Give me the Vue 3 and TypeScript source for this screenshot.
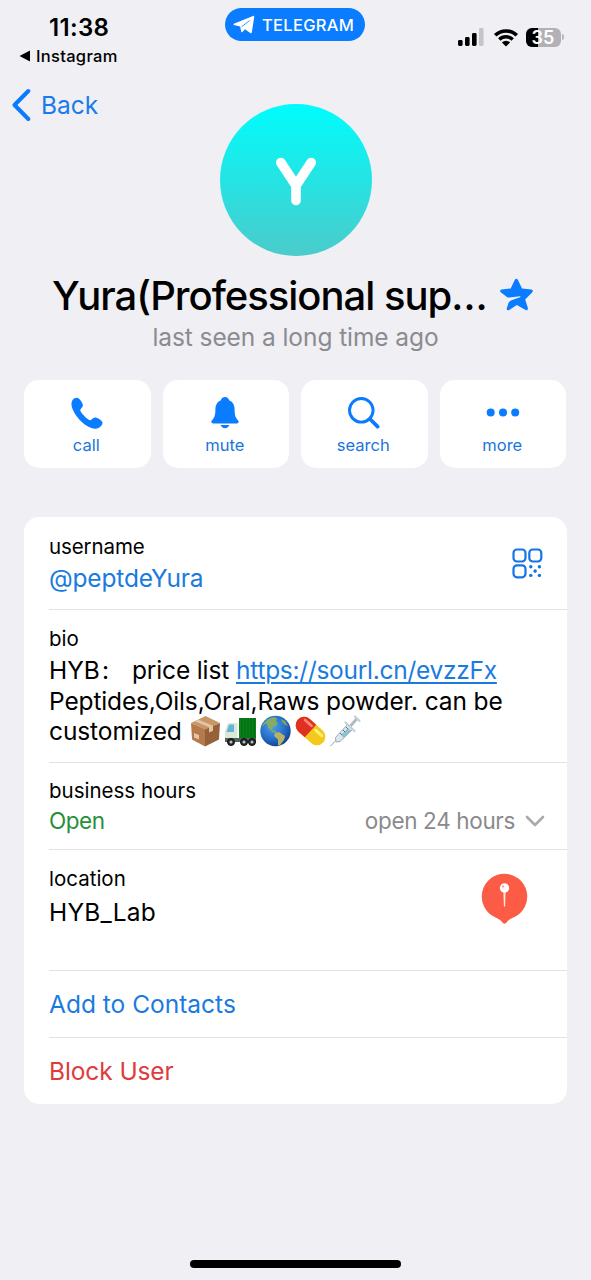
<script setup lang="ts">
interface Action {
  id: 'call' | 'mute' | 'search' | 'more'
  label: string
}

const actions: Action[] = [
  { id: 'call', label: 'call' },
  { id: 'mute', label: 'mute' },
  { id: 'search', label: 'search' },
  { id: 'more', label: 'more' },
]
</script>

<template>
  <main class="screen">
    <header class="status">
      <div class="status-left">
        <div class="time">11:38</div>
        <div class="return">
          <svg width="12" height="12" viewBox="0 0 12 12"><path d="M.5 6 11 .6v10.800z" fill="#000" /></svg>
          <span>Instagram</span>
        </div>
      </div>
      <div class="pill">
        <svg width="22" height="20" viewBox="0 0 22 20">
          <path d="M.8 8.800 20 .9q1.500-.5 1.200 1L18.900 17.300q-.4 1.500-1.700.6L12 14.200 9.400 17q-1 .8-1.200-.6L7.100 11.500.9 10Q0 9.500.8 8.800Z" fill="#fff" />
          <path d="M8.800 11.600 16.300 5.800" fill="none" stroke="#0a7cff" stroke-width=".8" stroke-linecap="round" />
        </svg>
        <span>TELEGRAM</span>
      </div>
      <div class="status-right">
        <svg width="26" height="18" viewBox="0 0 26 18">
          <rect x="0" y="12" width="4.600" height="6" rx="1.400" />
          <rect x="7" y="9" width="4.600" height="9" rx="1.400" />
          <rect x="14" y="5" width="4.600" height="13" rx="1.400" />
          <rect x="21" y="0" width="4.600" height="18" rx="1.400" fill="#c5c5c9" />
        </svg>
        <svg class="wifi" width="26" height="19" viewBox="0 0 26 19">
          <path d="M2.200 7.300a15.400 15.400 0 0 1 21.600 0M6.300 11.600a9.500 9.500 0 0 1 13.400 0" fill="none" stroke="#000" stroke-width="3.500" />
          <path d="M8.900 14.400a5.800 5.800 0 0 1 8.200 0L13 18.600Z" />
        </svg>
        <div class="battery"><span class="level" /><b>35</b></div>
        <span class="nub" />
      </div>
    </header>

    <nav class="nav">
      <svg width="20" height="34" viewBox="0 0 20 34"><path d="M17.300 3 3.500 17l13.800 14" fill="none" stroke="#0a7aff" stroke-width="4" stroke-linecap="round" stroke-linejoin="round" /></svg>
      <span>Back</span>
    </nav>

    <section class="profile">
      <div class="avatar">
        <svg width="40" height="50" viewBox="0 0 40 50" role="img" aria-label="Y">
          <path d="M4.800 5.500 20 28.500 35.200 5.500M20 28.500V43.500" fill="none" stroke="#fff" stroke-width="9.600" stroke-linecap="round" stroke-linejoin="round" />
        </svg>
      </div>
      <h1 class="name">
        <span>Yura(Professional sup…</span>
        <svg width="34" height="34" viewBox="0 0 34 34">
          <path d="M14.700 1.900q1.600-2.500 3.300 0l4 8.600 9.300 1q2.600.7 1 2.700l-7.100 7.400 2.700 8.500q.2 2.800-2.300 2l-8.800-5-7.500 4.900q-2.700.9-2.600-1.500l1.900-5.700q.8-1.800 3-2.500l8.500-3.100q1-.7-.2-.9l-10.600 1.300q-2 0-3-1.200L.7 14.200q-1.500-2 .8-2.800l9.200-.9Z" fill="#0a7cff" />
        </svg>
      </h1>
      <p class="seen">last seen a long time ago</p>
    </section>

    <section class="actions">
      <button v-for="a in actions" :key="a.id" :class="['action', a.id]">
        <svg v-if="a.id === 'call'" width="32" height="32" viewBox="0 0 32 32">
          <path d="M1.600 3.100C3.300.8 6 .2 7.800 1.500c2 1.500 4 5 4.100 6.800.1 1.900-2.300 3-2.700 4.600-.5 2.200 7.200 10 9.700 10.300 2 .2 2.700-2.500 5-2.600 1.900 0 6.200 2.200 7.300 4.200 1 2-.8 4.600-3.200 5.900-3.200 1.700-7 1.100-11.400-1.400C9 25 2.500 16 .9 10.200.2 7.500.2 5 1.600 3.100Z" />
        </svg>
        <svg v-else-if="a.id === 'mute'" width="28" height="32" viewBox="0 0 28 32">
          <path d="M14 0c2.200 0 3.800 1.400 4.100 3.300 4 1.800 5.500 5 5.500 9.200 0 6.500 1.200 8.300 3.500 10.900 1.200 1.400.5 3-1.200 3H2.100c-1.700 0-2.400-1.600-1.200-3 2.300-2.600 3.500-4.400 3.500-10.900 0-4.200 1.500-7.400 5.500-9.200C10.200 1.400 11.800 0 14 0ZM9.600 28h8.800c-.6 2-2.300 3.200-4.400 3.200S10.200 30 9.600 28Z" />
        </svg>
        <svg v-else-if="a.id === 'search'" width="32" height="32" viewBox="0 0 32 32">
          <circle cx="13.300" cy="13.300" r="11.800" fill="none" stroke="#0a7aff" stroke-width="2.900" />
          <path d="m22 22 7.600 7.600" stroke="#0a7aff" stroke-width="3.700" stroke-linecap="round" />
        </svg>
        <svg v-else width="34" height="32" viewBox="0 0 34 32">
          <circle cx="4.700" cy="15.500" r="4" /><circle cx="17" cy="15.500" r="4" /><circle cx="29.200" cy="15.500" r="4" />
        </svg>
        <span>{{ a.label }}</span>
      </button>
    </section>

    <section class="card">
      <div class="row username">
        <div>
          <div class="label">username</div>
          <div class="value link handle">@peptdeYura</div>
        </div>
        <svg class="qr" width="31" height="31" viewBox="0 0 31 31">
          <g fill="none" stroke="#1674e6" stroke-width="2.200">
            <rect x="1.500" y="1.500" width="12" height="12" rx="3.500" />
            <rect x="17.300" y="1.500" width="12" height="12" rx="3.500" />
            <rect x="1.500" y="17.300" width="12" height="12" rx="3.500" />
          </g>
          <g fill="#1674e6">
            <circle cx="18.800" cy="18.800" r="1.700" /><circle cx="27.400" cy="18.800" r="1.700" />
            <circle cx="23.100" cy="23.100" r="1.800" />
            <circle cx="18.800" cy="27.400" r="1.700" /><circle cx="27.400" cy="27.400" r="1.700" />
          </g>
        </svg>
      </div>

      <div class="row bio">
        <div>
          <div class="label">bio</div>
          <div class="bio-text">
            <div class="line"><span class="hyb">HYB</span><span class="colon">:</span><span class="price">price list</span><a class="url">https://sourl.cn/evzzFx</a></div>
            <div class="line second">Peptides,Oils,Oral,Raws powder. can be</div>
            <div class="line">
              <span class="custom">customized</span>
              <span class="emojis">
                <svg width="31" height="32" viewBox="0 0 31 32" role="img" aria-label="package">
                  <path d="M1 8 15 14v17.500L2 24.500Z" fill="#b57a4b" />
                  <path d="M15 14 30 8l-1 16.500L15 31.500Z" fill="#966038" />
                  <path d="M1 8 15.500 1 30 8 15 14.500Z" fill="#c99668" />
                  <path d="m8 4.600 15 6.200v5l-4 1.800v-5.500L4.500 6.300Z" fill="#e0c6a5" />
                  <path d="m4 18 5 2v4.500l-5-2Z" fill="#e0c4ae" />
                </svg>
                <svg width="33" height="32" viewBox="0 0 33 32" role="img" aria-label="truck">
                  <path d="M15 3h17v21H15Z" fill="#098018" />
                  <path d="M18 3v21m3-21v21m3-21v21m3-21v21m3-21v21" stroke="#056611" />
                  <path d="M4 8h9.500v17H1v-9Z" fill="#dce7d9" />
                  <path d="M5 9.500h5V17H2.500Z" fill="#62b6d5" />
                  <path d="M1 23h31v4H1Z" fill="#58605c" />
                  <g fill="#252a2b" stroke="#111"><circle cx="7" cy="27" r="3.500" /><circle cx="20" cy="27" r="3.500" /><circle cx="28" cy="27" r="3.500" /></g>
                  <g fill="#b9c0c2"><circle cx="7" cy="27" r="1.500" /><circle cx="20" cy="27" r="1.500" /><circle cx="28" cy="27" r="1.500" /></g>
                </svg>
                <svg width="31" height="32" viewBox="0 0 31 32" role="img" aria-label="globe">
                  <defs><radialGradient id="sea" cx=".4" cy=".35" r=".7"><stop stop-color="#4ba3ee" /><stop offset=".65" stop-color="#2268c4" /><stop offset="1" stop-color="#123f89" /></radialGradient></defs>
                  <circle cx="15.500" cy="16" r="15.200" fill="url(#sea)" />
                  <path d="M3 9 8 4l6-2 3 1.500-1 3 2 1.500-2 3-3 1-1.500 3 4 1 1.500 2-4-.5-5-5-1-4-3 1-2 3Z" fill="#86ab62" />
                  <path d="m15 18 4-1 6 4-1 4-4 5-2 .5v-6l-4-3.500Z" fill="#b9b266" />
                  <path d="m21 4 4 2 3 5-3-1-3-3Z" fill="#7da657" />
                </svg>
                <svg width="31" height="32" viewBox="0 0 31 32" role="img" aria-label="pill">
                  <g transform="rotate(42 15.500 16)">
                    <rect x="-1.500" y="7.500" width="34" height="17" rx="8.500" fill="#f3c91d" />
                    <path d="M15.500 7.500H7a8.500 8.500 0 0 0 0 17h8.500Z" fill="#df3022" />
                    <path d="M4 11.500h9" stroke="#ff8874" stroke-width="2.500" stroke-linecap="round" />
                    <path d="M19 12h8" stroke="#fff071" stroke-width="3" stroke-linecap="round" />
                  </g>
                </svg>
                <svg width="31" height="32" viewBox="0 0 31 32" role="img" aria-label="syringe">
                  <path d="M.5 31 8 23.500" stroke="#929ba3" stroke-width="1" />
                  <path d="m5.500 22.500 12-13 5 5-12.500 12-4 .5Z" fill="#dce7ec" stroke="#9cabb4" />
                  <path d="m11 20 7-7 3 3-7 7Z" fill="#8fbfd3" />
                  <path d="m20 11.500 7-8" stroke="#aebbc2" stroke-width="3" />
                  <path d="m15.500 7.500 9 8.500M25 1.500l4.500 4.500" stroke="#c5d0d5" stroke-width="2.200" stroke-linecap="round" />
                  <path d="m10 18 2 2m1-5 2 2m1-5 2 2" stroke="#5a7380" />
                </svg>
              </span>
            </div>
          </div>
        </div>
      </div>

      <div class="row hours">
        <div>
          <div class="label">business hours</div>
          <div class="hours-line">
            <span class="open">Open</span>
            <span class="range">open 24 hours</span>
            <svg width="20" height="12" viewBox="0 0 20 12"><path d="m2 2 8 8 8-8" fill="none" stroke="#aaaaae" stroke-width="2.600" stroke-linecap="round" stroke-linejoin="round" /></svg>
          </div>
        </div>
      </div>

      <div class="row location">
        <div>
          <div class="label">location</div>
          <div class="value lab">HYB_Lab</div>
        </div>
        <svg class="pin" width="47" height="52" viewBox="0 0 47 52">
          <path d="M23.500.8a22.800 22.800 0 0 1 9.500 43.500c-4 1.700-5.800 3-7.700 5.500q-1.800 2-3.600 0c-1.900-2.500-3.700-3.800-7.700-5.500a22.800 22.800 0 0 1 9.500-43.500Z" fill="#fc5c46" />
          <path d="M22.400 18h2.200l-.5 15.500h-1.200Z" fill="#ffe9e4" />
          <circle cx="23.500" cy="15" r="4.700" fill="#fff" />
          <circle cx="22" cy="13.500" r="1.100" fill="#fc8c7c" />
        </svg>
      </div>

      <div class="row add"><div class="value link">Add to Contacts</div></div>
      <div class="row block"><div class="value blocktext">Block User</div></div>
    </section>

    <div class="home" />
  </main>
</template>

<style>
html,
body {
  margin: 0;
  background: #efeff4;
}
</style>

<style scoped>
.screen {
  box-sizing: border-box;
  width: 591px;
  height: 1280px;
  display: flex;
  flex-direction: column;
  overflow: hidden;
  background: #efeff4;
  color: #000;
  font-family: Inter, "Liberation Sans", sans-serif;
}
svg {
  display: block;
  flex: none;
}
span,
.label,
.value,
.line {
  white-space: nowrap;
}
.status {
  display: grid;
  grid-template-columns: 225px 140px 1fr;
  height: 82px;
}
.time {
  margin: 12px 0 0 49px;
  font-size: 24px;
  line-height: 31px;
  font-weight: 600;
  letter-spacing: .35px;
}
.return {
  display: flex;
  align-items: center;
  gap: 5px;
  margin: 3px 0 0 19px;
  font-size: 16.500px;
  line-height: 20px;
  font-weight: 500;
  letter-spacing: .3px;
}
.pill {
  display: flex;
  align-items: center;
  box-sizing: border-box;
  height: 33px;
  margin-top: 8px;
  padding-left: 8px;
  gap: 7px;
  border-radius: 17px;
  background: #0a7cff;
  color: #fff;
  font-size: 16.500px;
  font-weight: 500;
  letter-spacing: .3px;
}
.status-right {
  display: flex;
  align-items: center;
  height: 22px;
  margin: 26px 0 0 93px;
}
.wifi {
  margin-left: 9px;
}
.battery {
  display: flex;
  position: relative;
  align-items: center;
  justify-content: center;
  width: 35px;
  height: 19px;
  margin-left: 7px;
  overflow: hidden;
  border-radius: 6px;
  background: #b2b2b6;
  color: #fff;
  font-size: 18px;
}
.battery b {
  position: relative;
  margin-right: 1px;
  font-weight: 600;
}
.level {
  position: absolute;
  left: 0;
  top: 0;
  width: 12px;
  height: 19px;
  background: #000;
}
.nub {
  width: 2px;
  height: 6px;
  margin-left: 1px;
  border-radius: 0 2px 2px 0;
  background: #b9b9bd;
}
.nav {
  display: flex;
  align-items: center;
  gap: 10px;
  height: 46px;
  margin-left: 11px;
  color: #1a7bea;
  font-size: 24.500px;
}
.profile {
  display: flex;
  flex-direction: column;
  align-items: center;
  margin-top: -24px;
}
.avatar {
  display: flex;
  align-items: center;
  justify-content: center;
  box-sizing: border-box;
  width: 152px;
  height: 152px;
  padding-top: 3px;
  border-radius: 50%;
  background: linear-gradient(#00fcfc, #4bcbcb);
}
.name {
  display: flex;
  align-items: center;
  align-self: flex-start;
  gap: 13px;
  height: 48px;
  margin: 16px 0 0 52px;
  font-size: 40px;
  line-height: 48px;
  font-weight: 500;
  letter-spacing: -1.020px;
}
.name svg {
  margin-bottom: 2px;
}
.seen {
  margin: 2px 0 0;
  color: #8b8b90;
  font-size: 24.500px;
  line-height: 30px;
  letter-spacing: -.08px;
}
.actions {
  display: grid;
  grid-template-columns: repeat(4, 1fr);
  gap: 12px;
  margin: 28px 25px 0 24px;
}
.action {
  display: flex;
  flex-direction: column;
  align-items: center;
  box-sizing: border-box;
  height: 88px;
  padding: 17px 2px 0 0;
  gap: 6px;
  border: 0;
  border-radius: 15px;
  background: #fff;
  color: #1a76dc;
  fill: #0a7cff;
  font-family: inherit;
  font-size: 16.500px;
  line-height: 20px;
}
.action svg {
  margin-left: 1px;
}
.more {
  padding-right: 1px;
}
.card {
  display: flex;
  flex-direction: column;
  width: 543px;
  height: 587px;
  margin: 49px 0 0 24px;
  border-radius: 15px;
  background: #fff;
}
.row {
  display: flex;
  justify-content: space-between;
  box-sizing: border-box;
  margin-left: 25px;
  border-bottom: 1.500px solid #e3e3e6;
}
.label {
  font-size: 20.500px;
  line-height: 30px;
}
.username .label {
  letter-spacing: -.1px;
}
.value {
  font-size: 24.500px;
  line-height: 30px;
}
.link {
  color: #1a7bdf;
}
.username {
  height: 93px;
  padding-top: 15px;
}
.handle {
  margin-top: 1px;
  letter-spacing: -.15px;
}
.qr {
  margin: 16px 24px 0 0;
}
.bio {
  height: 153px;
  padding-top: 14px;
}
.bio-text {
  margin-top: 1.400px;
  font-size: 24.500px;
  line-height: 30.400px;
}
.line {
  display: flex;
  height: 30.400px;
}
.second {
  letter-spacing: -.14px;
}
.hyb {
  width: 50px;
}
.colon {
  width: 30px;
  padding-left: 3px;
}
.price {
  letter-spacing: -.15px;
}
.url {
  margin-left: 7px;
  color: #1a7bdf;
  letter-spacing: -.27px;
  text-decoration: underline;
  text-decoration-thickness: 1.500px;
  text-underline-offset: 3px;
}
.custom {
  letter-spacing: -.1px;
}
.emojis {
  display: flex;
  gap: 4px;
  margin: -1.500px 0 0 8.500px;
}
.emojis svg:nth-child(2) {
  margin: 0 -1px;
}
.hours {
  height: 87px;
  padding-top: 13px;
}
.hours > div {
  flex: 1;
}
.hours-line {
  display: flex;
  align-items: center;
  height: 29px;
  font-size: 22.500px;
}
.open {
  color: #26903a;
  letter-spacing: -.45px;
}
.range {
  margin-left: auto;
  color: #8a8a8e;
  letter-spacing: -.35px;
}
.hours-line svg {
  margin: 0 22px 0 10px;
}
.location {
  height: 121px;
  padding-top: 14px;
}
.lab {
  margin-top: 3px;
  letter-spacing: .2px;
}
.pin {
  margin: 9px 39px 0 0;
}
.add {
  height: 67px;
  padding-top: 18px;
}
.block {
  height: 66px;
  padding-top: 18px;
  border: 0;
  color: #df3b3c;
}
.blocktext {
  letter-spacing: -.1px;
}
.home {
  width: 211px;
  height: 8px;
  margin: 156px 0 0 190px;
  border-radius: 4px;
  background: #000;
}
</style>
